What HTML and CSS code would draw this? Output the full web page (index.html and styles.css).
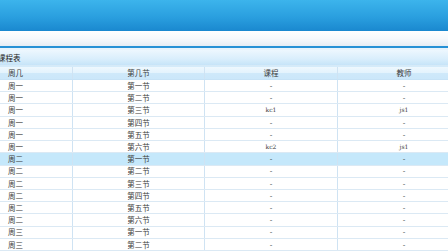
FILE: index.html
```html
<!DOCTYPE html>
<html lang="zh">
<head>
<meta charset="utf-8">
<title>课程表</title>
<link rel="stylesheet" href="styles.css">
</head>
<body>
<div class="top"></div>
<div class="band"></div>
<div class="line"></div>
<div class="title"><span class="title-text">课程表</span></div>
<div class="grid">
  <div class="row head"><div class="c c1">周几</div><div class="c">第几节</div><div class="c">课程</div><div class="c">教师</div></div>
  <div class="row"><div class="c c1">周一</div><div class="c">第一节</div><div class="c">-</div><div class="c">-</div></div>
  <div class="row"><div class="c c1">周一</div><div class="c">第二节</div><div class="c">-</div><div class="c">-</div></div>
  <div class="row"><div class="c c1">周一</div><div class="c">第三节</div><div class="c lat">kc1</div><div class="c lat">js1</div></div>
  <div class="row"><div class="c c1">周一</div><div class="c">第四节</div><div class="c">-</div><div class="c">-</div></div>
  <div class="row"><div class="c c1">周一</div><div class="c">第五节</div><div class="c">-</div><div class="c">-</div></div>
  <div class="row"><div class="c c1">周一</div><div class="c">第六节</div><div class="c lat">kc2</div><div class="c lat">js1</div></div>
  <div class="row sel"><div class="c c1">周二</div><div class="c">第一节</div><div class="c">-</div><div class="c">-</div></div>
  <div class="row"><div class="c c1">周二</div><div class="c">第二节</div><div class="c">-</div><div class="c">-</div></div>
  <div class="row"><div class="c c1">周二</div><div class="c">第三节</div><div class="c">-</div><div class="c">-</div></div>
  <div class="row"><div class="c c1">周二</div><div class="c">第四节</div><div class="c">-</div><div class="c">-</div></div>
  <div class="row"><div class="c c1">周二</div><div class="c">第五节</div><div class="c">-</div><div class="c">-</div></div>
  <div class="row"><div class="c c1">周二</div><div class="c">第六节</div><div class="c">-</div><div class="c">-</div></div>
  <div class="row"><div class="c c1">周三</div><div class="c">第一节</div><div class="c">-</div><div class="c">-</div></div>
  <div class="row"><div class="c c1">周三</div><div class="c">第二节</div><div class="c">-</div><div class="c">-</div></div>
</div>
</body>
</html>
```
FILE: styles.css
```css
html, body {
  margin: 0;
  padding: 0;
  overflow: hidden;
  background: #ffffff;
}
body {
  width: 448px;
  height: 252px;
  font-family: "Noto Sans CJK SC", "Liberation Sans", sans-serif;
  font-size: 7.5px;
  color: #3a3a3a;
}
.top {
  height: 31px;
  background: linear-gradient(to bottom, #3cb4ec 0%, #2a9fdf 55%, #1a88cf 100%);
}
.band {
  height: 15px;
  background: linear-gradient(to bottom, #ffffff 0%, #f6f9fc 50%, #e4ecf4 100%);
}
.line {
  height: 2px;
  background: #2590d5;
  border-bottom: 2px solid #e6f3fc;
}
.title {
  height: 16px;
  display: flex;
  align-items: center;
  background: linear-gradient(to bottom, #edf7fe 0%, #d9eefc 60%, #c6e4f8 100%);
  border-bottom: 1px solid #d6eaf8;
  box-sizing: border-box;
}
.title-text {
  margin-left: -2px;
  color: #222222;
}
.grid {
  width: 470px;
}
.row {
  display: grid;
  grid-template-columns: 72px 132px 133px 133px;
  height: 12.23px;
  box-sizing: border-box;
  border-bottom: 1px solid #dbe9f4;
  background: #ffffff;
}
.row.head {
  height: 14px;
  background: linear-gradient(to bottom, #eef8fe 0%, #e3f3fd 50%, #cfe9fa 51%, #cbe7fa 100%);
  border-top: 1px solid #d4ebfa;
  border-bottom: 1px solid #c6e2f6;
}
.row.sel {
  background: #c5e8fb;
}
.c {
  display: flex;
  align-items: center;
  justify-content: center;
  border-left: 1px solid #cfe3f3;
  line-height: 1;
  white-space: nowrap;
}
.c1 {
  justify-content: flex-start;
  padding-left: 8px;
  border-left: none;
}
.lat {
  font-family: "DejaVu Serif", "Liberation Serif", serif;
  font-size: 6px;
}
```
